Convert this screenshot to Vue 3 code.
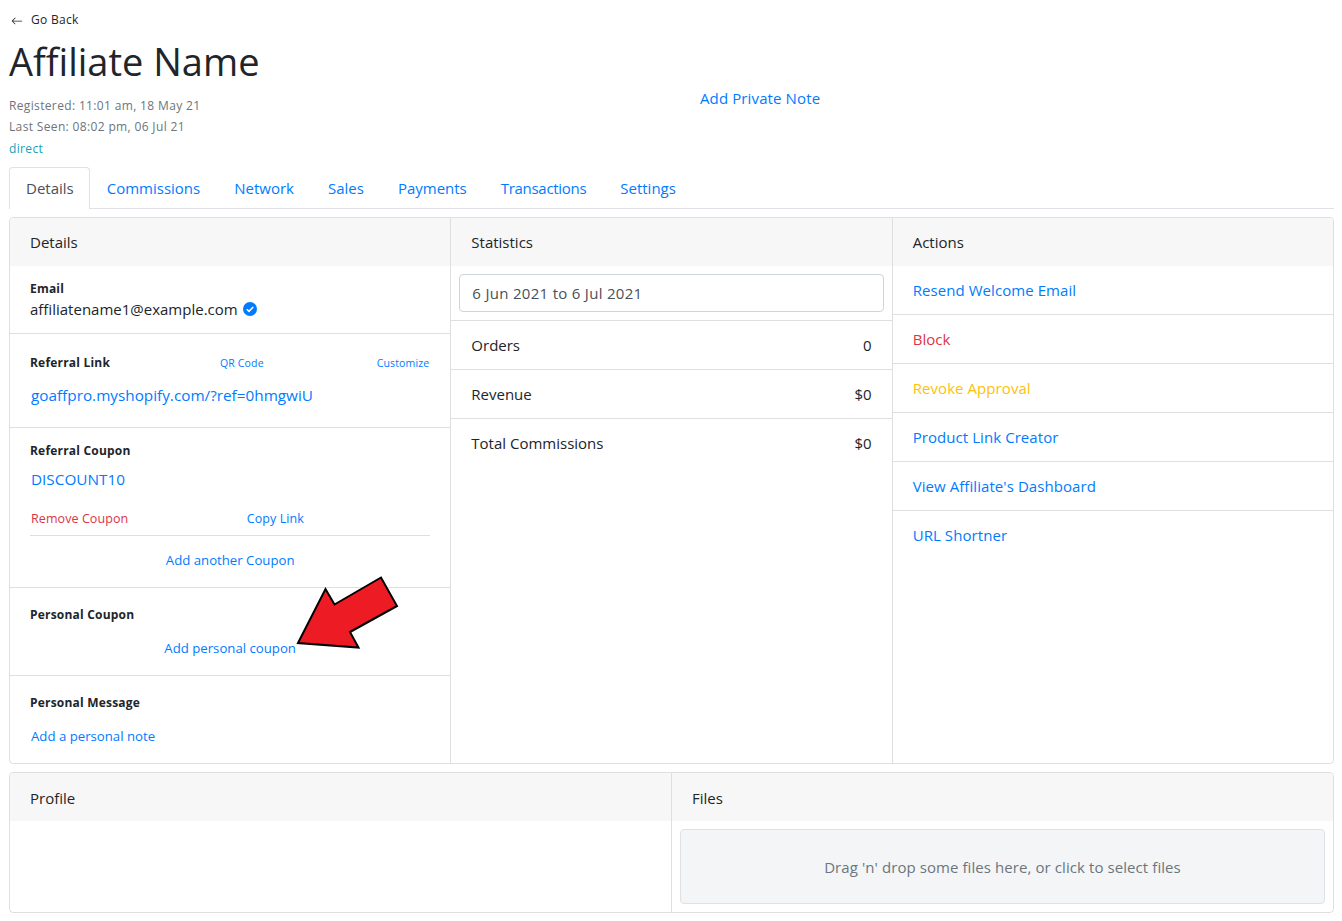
<script setup>
const tabs = ['Details', 'Commissions', 'Network', 'Sales', 'Payments', 'Transactions', 'Settings']
const stats = [
  { label: 'Orders', value: '0' },
  { label: 'Revenue', value: '$0' },
  { label: 'Total Commissions', value: '$0' }
]
const actions = [
  { label: 'Resend Welcome Email', cls: 'blue' },
  { label: 'Block', cls: 'red' },
  { label: 'Revoke Approval', cls: 'amber' },
  { label: 'Product Link Creator', cls: 'blue' },
  { label: "View Affiliate's Dashboard", cls: 'blue' },
  { label: 'URL Shortner', cls: 'blue' }
]
</script>

<template>
  <main class="page">
    <div class="back">
      <svg width="12" height="12" viewBox="0 0 16 16" fill="#212529">
        <path fill-rule="evenodd" d="M15 8a.5.5 0 0 1-.5.5H2.7l3.15 3.15a.5.5 0 0 1-.7.7l-4-4a.5.5 0 0 1 0-.7l4-4a.5.5 0 1 1 .7.7L2.7 7.5h11.8A.5.5 0 0 1 15 8z" />
      </svg>
      <span>Go Back</span>
    </div>
    <h1>Affiliate Name</h1>
    <div class="head-row">
      <div class="meta">
        <div>Registered: 11:01 am, 18 May 21</div>
        <div>Last Seen: 08:02 pm, 06 Jul 21</div>
        <div class="teal">direct</div>
      </div>
      <a class="note">Add Private Note</a>
    </div>

    <nav class="tabs">
      <a v-for="(t, i) in tabs" :key="t" :class="['tab', { active: i === 0 }]">{{ t }}</a>
    </nav>

    <section class="card top">
      <div class="col">
        <div class="col-head">Details</div>
        <div class="row email">
          <strong>Email</strong>
          <div class="email-line">
            affiliatename1@example.com
            <svg width="14" height="14" viewBox="0 0 14 14">
              <circle cx="7" cy="7" r="7" fill="#007bff" />
              <path d="M3.8 7.2l2.2 2.2 4.2-4.4" fill="none" stroke="#fff" stroke-width="1.6" />
            </svg>
          </div>
        </div>
        <div class="row referral">
          <div class="ref-head">
            <strong>Referral Link</strong>
            <a class="tiny qr">QR Code</a>
            <a class="tiny">Customize</a>
          </div>
          <a class="ref-url">goaffpro.myshopify.com/?ref=0hmgwiU</a>
        </div>
        <div class="row coupon">
          <strong>Referral Coupon</strong>
          <a class="ref-url code">DISCOUNT10</a>
          <div class="coupon-links">
            <a class="small red">Remove Coupon</a>
            <a class="small">Copy Link</a>
            <span class="spacer"></span>
          </div>
          <a class="link center">Add another Coupon</a>
        </div>
        <div class="row personal">
          <strong>Personal Coupon</strong>
          <a class="link center">Add personal coupon</a>
        </div>
        <div class="row message">
          <strong>Personal Message</strong>
          <a class="link indent">Add a personal note</a>
        </div>
      </div>

      <div class="col">
        <div class="col-head">Statistics</div>
        <div class="range-wrap">
          <div class="range">6 Jun 2021 to 6 Jul 2021</div>
        </div>
        <div v-for="s in stats" :key="s.label" class="stat">
          <span>{{ s.label }}</span>
          <span>{{ s.value }}</span>
        </div>
      </div>

      <div class="col">
        <div class="col-head">Actions</div>
        <a v-for="a in actions" :key="a.label" :class="['action', a.cls]">{{ a.label }}</a>
      </div>
    </section>

    <section class="card bottom">
      <div class="col">
        <div class="col-head">Profile</div>
      </div>
      <div class="col">
        <div class="col-head">Files</div>
        <div class="drop-wrap">
          <div class="drop">Drag 'n' drop some files here, or click to select files</div>
        </div>
      </div>
    </section>

    <svg class="arrow" width="110" height="80" viewBox="0 0 110 80">
      <path d="M3 68 L30.500 14 L39.500 29.500 L86 2.500 L102 31 L55 57 L63.500 72.500 Z" fill="#ed1c24" stroke="#000" stroke-width="2" />
    </svg>
  </main>
</template>

<style scoped>
.page {
  position: relative;
  box-sizing: border-box;
  width: 1342px;
  height: 921px;
  overflow: hidden;
  padding: 9px 8px 0 9px;
  color: #212529;
  font-family: "Open Sans", "Noto Sans", sans-serif;
  font-size: 15px;
}
a {
  color: #007bff;
}
.back {
  display: flex;
  align-items: center;
  gap: 8px;
  height: 20px;
  padding-left: 2px;
  font-size: 12px;
  letter-spacing: 0.3px;
}
.back svg {
  margin-top: 3px;
}
h1 {
  margin: 8px 0 0;
  height: 48px;
  font-size: 38px;
  font-weight: 400;
  line-height: 48px;
}
.head-row {
  display: flex;
  height: 82px;
}
.meta {
  padding-top: 10px;
  width: 691px;
  color: #6c757d;
  font-size: 12px;
  line-height: 21px;
  letter-spacing: 0.35px;
}
.teal {
  margin-top: 1px;
  color: #17a2b8;
}
.note {
  padding-top: 2px;
  line-height: 22px;
  letter-spacing: 0.12px;
}
.tabs {
  display: flex;
  height: 41px;
  border-bottom: 1px solid #dee2e6;
  box-sizing: content-box;
}
.tab {
  padding: 0 16px;
  line-height: 41px;
  border: 1px solid transparent;
  border-bottom: none;
  height: 41px;
  box-sizing: border-box;
}
.tab:nth-child(6) {
  letter-spacing: -0.3px;
}
.tab.active {
  padding-right: 15px;
  color: #495057;
  background: #fff;
  border-color: #dee2e6;
  border-radius: 4px 4px 0 0;
  height: 42px;
}
.card {
  display: flex;
  border: 1px solid rgba(0, 0, 0, 0.125);
  border-radius: 4px;
  overflow: hidden;
}
.top {
  margin-top: 8px;
  height: 547px;
  box-sizing: border-box;
}
.bottom {
  margin-top: 8px;
  height: 141px;
  box-sizing: border-box;
}
.bottom .col-head {
  line-height: 50px;
}
.col {
  flex: 1;
  display: flex;
  flex-direction: column;
  min-width: 0;
  border-left: 1px solid rgba(0, 0, 0, 0.125);
}
.col:first-child {
  border-left: none;
}
.col-head {
  flex: none;
  box-sizing: border-box;
  height: 48px;
  padding: 0 20px;
  background: #f7f7f7;
  line-height: 48px;
}
.row {
  box-sizing: border-box;
  padding: 13px 20px 0;
  border-bottom: 1px solid rgba(0, 0, 0, 0.125);
}
.row:last-child {
  border-bottom: none;
}
strong {
  display: block;
  font-size: 12px;
  line-height: 20px;
  font-weight: 700;
  letter-spacing: 0.2px;
  color: #212529;
}
.email {
  height: 68px;
}
.email-line {
  display: flex;
  align-items: center;
  gap: 5px;
  margin-top: -1px;
  font-size: 15px;
  line-height: 22px;
}
.referral {
  height: 94px;
}
.ref-head {
  display: flex;
  justify-content: space-between;
  align-items: center;
  margin-top: 6px;
  padding-right: 1px;
}
.tiny {
  font-size: 10.500px;
  letter-spacing: 0.15px;
}
.qr {
  margin-right: 3px;
}
.ref-url {
  display: block;
  margin-top: 11px;
  padding-left: 1px;
  font-size: 15.300px;
  line-height: 22px;
}
.coupon {
  height: 161px;
}
.code {
  margin-top: 7px;
}
.coupon-links {
  display: flex;
  justify-content: space-between;
  margin-top: 19px;
  padding-bottom: 6px;
  padding-left: 1px;
  border-bottom: 1px solid rgba(0, 0, 0, 0.125);
}
.spacer {
  width: 8px;
}
.small {
  font-size: 12.500px;
  line-height: 20px;
  letter-spacing: 0.08px;
}
.link {
  font-size: 13.200px;
  line-height: 20px;
}
.red,
.small.red {
  color: #dc3545;
}
.amber {
  color: #ffc107;
}
.blue {
  color: #007bff;
}
.center {
  display: block;
  text-align: center;
}
.coupon .center {
  margin-top: 14px;
}
.personal {
  height: 88px;
  padding-top: 17px;
}
.personal .center {
  margin-top: 13px;
}
.message {
  height: 87px;
  padding-top: 17px;
}
.indent {
  display: block;
  margin-top: 13px;
  padding-left: 1px;
}
.range-wrap {
  box-sizing: border-box;
  height: 55px;
  padding: 8px 8px 0;
  border-bottom: 1px solid rgba(0, 0, 0, 0.125);
}
.range {
  box-sizing: border-box;
  height: 38px;
  padding: 0 12px;
  border: 1px solid #ced4da;
  border-radius: 4px;
  line-height: 36px;
  color: #495057;
  letter-spacing: 0.3px;
}
.stat {
  display: flex;
  justify-content: space-between;
  box-sizing: border-box;
  height: 49px;
  padding: 0 20px;
  line-height: 48px;
  border-bottom: 1px solid rgba(0, 0, 0, 0.125);
}
.stat:last-child {
  border-bottom: none;
}
.action {
  box-sizing: border-box;
  height: 49px;
  padding: 0 20px;
  line-height: 48px;
  letter-spacing: 0.07px;
  border-bottom: 1px solid rgba(0, 0, 0, 0.125);
}
.action:last-child {
  border-bottom: none;
}
.drop-wrap {
  padding: 8px;
}
.drop {
  box-sizing: border-box;
  height: 75px;
  border: 1px solid #dee2e6;
  border-radius: 4px;
  background: #f4f5f7;
  color: #6c757d;
  text-align: center;
  line-height: 75px;
  letter-spacing: 0.08px;
}
.arrow {
  position: absolute;
  left: 295px;
  top: 575px;
}
</style>
